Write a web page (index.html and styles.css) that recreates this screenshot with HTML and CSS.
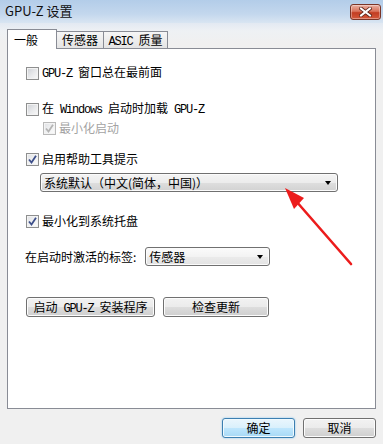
FILE: index.html
```html
<!DOCTYPE html>
<html>
<head>
<meta charset="utf-8">
<link rel="stylesheet" href="styles.css">
</head>
<body>
<div class="window">
  <div class="titlebar">
    <span class="title">GPU-Z 设置</span>
    <div class="close">
      <svg width="13" height="10" viewBox="0 0 13 10"><path d="M2 1.5 L11 8.5 M11 1.5 L2 8.5" stroke="#5a2318" stroke-width="3.6" stroke-linecap="square"/><path d="M2 1.5 L11 8.5 M11 1.5 L2 8.5" stroke="#ffffff" stroke-width="2" stroke-linecap="square"/></svg>
    </div>
  </div>
  <div class="body">
    <div class="tabs">
      <div class="tab active">一般</div>
      <div class="tab t2">传感器</div>
      <div class="tab t3"><span class="lat">ASIC </span>质量</div>
    </div>
    <div class="panel">
      <div class="row r1"><span class="cb"></span><span class="lbl"><span class="lat">GPU-Z </span>窗口总在最前面</span></div>
      <div class="row r2"><span class="cb"></span><span class="lbl">在<span class="lat"> Windows </span>启动时加载<span class="lat"> GPU-Z</span></span></div>
      <div class="row r3"><span class="cb checked disabled"><svg width="11" height="11" viewBox="0 0 11 11"><path d="M2 5.5 L4.5 8.5 L9 1.8" fill="none" stroke="#b4b4b4" stroke-width="1.8"/></svg></span><span class="lbl dis">最小化启动</span></div>
      <div class="row r4"><span class="cb checked"><svg width="11" height="11" viewBox="0 0 11 11"><path d="M2 5.5 L4.5 8.5 L9 1.8" fill="none" stroke="#3d4f8a" stroke-width="1.8"/></svg></span><span class="lbl">启用帮助工具提示</span></div>
      <div class="select s1"><span>系统默认（中文(简体，中国)）</span><i class="caret"></i></div>
      <div class="row r5"><span class="cb checked"><svg width="11" height="11" viewBox="0 0 11 11"><path d="M2 5.5 L4.5 8.5 L9 1.8" fill="none" stroke="#3d4f8a" stroke-width="1.8"/></svg></span><span class="lbl">最小化到系统托盘</span></div>
      <div class="row r6"><span class="plain">在启动时激活的标签:</span><div class="select s2"><span>传感器</span><i class="caret"></i></div></div>
      <div class="btnrow">
        <div class="btn b1">启动<span class="lat"> GPU-Z </span>安装程序</div>
        <div class="btn b2">检查更新</div>
      </div>
    </div>
    <div class="footer">
      <div class="btn ok">确定</div>
      <div class="btn cancel">取消</div>
    </div>
  </div>
  <svg class="arrow" width="383" height="444" viewBox="0 0 383 444">
    <line x1="351" y1="264" x2="296" y2="201" stroke="#ec1c1c" stroke-width="2.6" stroke-linecap="round"/>
    <polygon points="285,188 304,198 294,209" fill="#ec1c1c"/>
  </svg>
</div>
</body>
</html>
```
FILE: styles.css
```css
* { box-sizing: border-box; }
html, body { margin: 0; padding: 0; }
body {
  width: 383px;
  height: 444px;
  overflow: hidden;
  font-family: "Noto Sans CJK SC", "Noto Sans", sans-serif;
  font-size: 12px;
  color: #000;
  background: #eff1f4;
}
.window {
  position: relative;
  width: 383px;
  height: 444px;
  background: #f0f0f0;
  display: flex;
  flex-direction: column;
}
.titlebar {
  height: 23px;
  display: flex;
  align-items: flex-start;
  justify-content: space-between;
  padding: 0 2px 0 5px;
  background: linear-gradient(#b3cde9 0%, #c3d7ed 60%, #d9e5f2 100%);
}
.title {
  font-size: 13px;
  line-height: 22px;
  color: #111;
}
.close {
  margin-top: 4px;
  width: 31px;
  height: 16px;
  border: 1px solid #7a3527;
  border-radius: 3px;
  background: linear-gradient(#eab0a2 0%, #d9735b 45%, #c23d22 55%, #d4593c 100%);
  display: flex;
  align-items: center;
  justify-content: center;
  box-shadow: inset 0 0 0 1px rgba(255,255,255,0.35);
}
.body {
  flex: 1;
  padding: 6px 7px 0 7px;
  background: linear-gradient(#e2e9f2 0px, #eef1f4 8px, #f0f0f0 20px);
}
.lat {
  font-family: "Liberation Mono", "DejaVu Sans Mono", monospace;
  font-size: 12px;
  letter-spacing: -1.2px;
  white-space: pre;
}
.tabs {
  display: flex;
  align-items: flex-end;
  height: 20px;
  margin-bottom: -1px;
  position: relative;
  z-index: 2;
}
.tab {
  height: 17px;
  margin-bottom: 1px;
  border: 1px solid #898c95;
  border-bottom: none;
  border-left: none;
  background: linear-gradient(#f6f6f6, #e4e4e4);
  line-height: 15px;
  text-align: center;
  white-space: nowrap;
}
.tab.active {
  height: 20px;
  margin-bottom: 0;
  width: 50px;
  border-left: 1px solid #898c95;
  background: #fff;
  text-align: left;
  padding-left: 6px;
  line-height: 20px;
}
.tab.t2 { width: 47px; }
.tab.t3 { width: 64px; }
.panel {
  height: 361px;
  border: 1px solid #898c95;
  background: #fff;
  padding-left: 18px;
  position: relative;
  z-index: 1;
}
.row {
  display: flex;
  align-items: center;
  height: 16px;
  line-height: 16px;
}
.r1 { margin-top: 16px; }
.r2 { margin-top: 20px; }
.r3 { margin-top: 3px; margin-left: 17px; }
.r4 { margin-top: 15px; }
.r5 { margin-top: 21px; }
.r6 { margin-top: 18px; height: 19px; margin-left: -1px; }
.cb {
  width: 13px;
  height: 13px;
  flex: none;
  border: 1px solid #8e8f8f;
  background: linear-gradient(135deg, #cdd0d5 0%, #e9eaec 55%, #fafafa 100%);
  box-shadow: inset 0 0 0 1px #f3f3f3;
  display: flex;
  align-items: center;
  justify-content: center;
}
.cb.checked { background: linear-gradient(135deg, #dfe1e4 0%, #f1f2f3 55%, #fcfcfc 100%); }
.cb.disabled { border-color: #b9b9b9; }
.lbl { margin-left: 3px; white-space: nowrap; }
.lbl.dis { color: #a3a3a3; }
.plain { white-space: nowrap; }
.select {
  position: relative;
  height: 19px;
  border: 1px solid #707070;
  border-radius: 3px;
  background: linear-gradient(#f4f4f4 0%, #ececec 50%, #dedede 51%, #d2d2d2 100%);
  box-shadow: inset 0 0 0 1px #fbfbfb;
  padding-left: 3px;
  line-height: 17px;
  white-space: nowrap;
}
.s1 { margin-top: 6px; margin-left: 14px; width: 298px; }
.s2 { margin-left: 9px; width: 125px; background: linear-gradient(#fbfbfb 0%, #f3f3f3 50%, #ebebeb 51%, #e3e3e3 100%); }
.caret {
  position: absolute;
  right: 6px;
  top: 7px;
  width: 0;
  height: 0;
  border-left: 3.5px solid transparent;
  border-right: 3.5px solid transparent;
  border-top: 4px solid #000;
}
.btnrow {
  display: flex;
  gap: 8px;
  margin-top: 31px;
}
.btn {
  height: 20px;
  border: 1px solid #707070;
  border-radius: 3px;
  background: linear-gradient(#f2f2f2 0%, #ebebeb 50%, #dddddd 51%, #cfcfcf 100%);
  box-shadow: inset 0 0 0 1px #fcfcfc;
  text-align: center;
  line-height: 18px;
  white-space: nowrap;
}
.b1 { width: 129px; }
.b2 { width: 106px; }
.footer {
  display: flex;
  justify-content: flex-end;
  gap: 8px;
  margin-top: 9px;
}
.ok, .cancel { width: 73px; }
.ok {
  border-color: #3c7fb1;
  background: linear-gradient(#eaf6fd 0%, #d9f0fc 50%, #bee6fd 51%, #a7d9f5 100%);
  box-shadow: inset 0 0 0 1px #f0fafe, 0 0 2px #7fc3ee;
}
.arrow {
  position: absolute;
  left: 0;
  top: 0;
  pointer-events: none;
  z-index: 5;
}
```
